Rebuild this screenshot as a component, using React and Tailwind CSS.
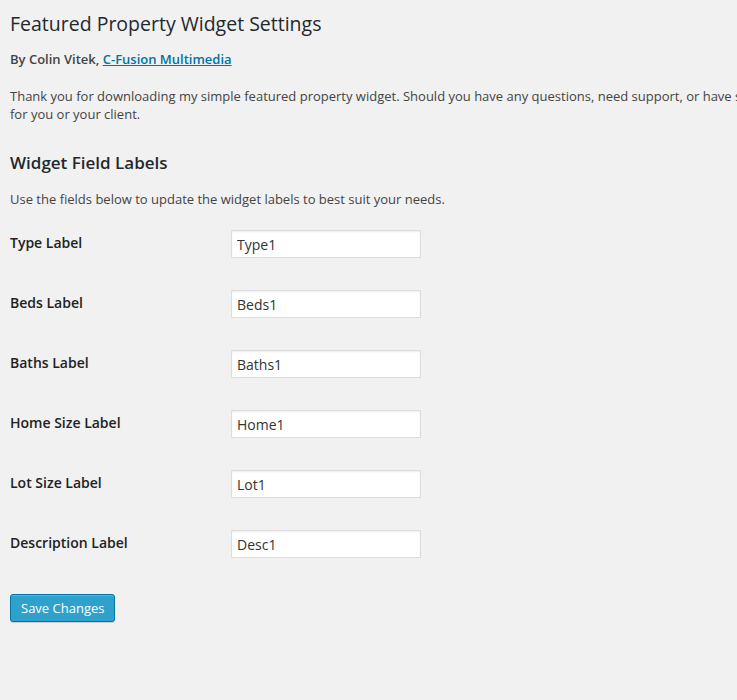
import { useState } from "react";

const FIELDS = [
  { id: "type", label: "Type Label", value: "Type1" },
  { id: "beds", label: "Beds Label", value: "Beds1" },
  { id: "baths", label: "Baths Label", value: "Baths1" },
  { id: "home", label: "Home Size Label", value: "Home1" },
  { id: "lot", label: "Lot Size Label", value: "Lot1" },
  { id: "desc", label: "Description Label", value: "Desc1" },
];

// one row of the settings table
const FieldRow = ({ field, value, onChange }) => (
  <div className="flex items-start h-[60px]">
    <label
      htmlFor={field.id}
      className="w-[221px] shrink-0 mt-[4px] text-[14px] leading-[18px] font-semibold text-[#222]"
    >
      {field.label}
    </label>
    <input
      id={field.id}
      type="text"
      value={value}
      onChange={(e) => onChange(field.id, e.target.value)}
      className="w-[190px] h-[28px] px-[5px] pt-[1px] bg-white border border-[#ddd] text-[14px] text-[#333] shadow-[inset_0_1px_2px_rgba(0,0,0,0.07)] outline-none"
    />
  </div>
);

export default function App() {
  const [values, setValues] = useState(() =>
    Object.fromEntries(FIELDS.map((f) => [f.id, f.value]))
  );
  const update = (id, v) => setValues((s) => ({ ...s, [id]: v }));

  return (
    <div className="min-h-[700px] w-full overflow-hidden bg-[#f1f1f1] font-['Open_Sans',sans-serif] text-[13px] text-[#444]">
      <div className="px-[10px]">
        <h1 className="pt-[9px] text-[19.5px] leading-[29px] font-normal text-[#23282d]">
          Featured Property Widget Settings
        </h1>

        <p className="mt-[12px] leading-[18px] font-semibold">
          By Colin Vitek,{" "}
          <a href="#" className="text-[#0074a2] underline">
            C-Fusion Multimedia
          </a>
        </p>

        {/* the first line runs past the window edge, as in the admin page */}
        <p className="mt-[19px] leading-[18px] whitespace-nowrap">
          Thank you for downloading my simple featured property widget. Should you have any questions, need support, or have suggestions, please feel free to contact me. I hope it works well
          <br />
          for you or your client.
        </p>

        <h2 className="mt-[28px] text-[17px] leading-[24px] font-semibold text-[#23282d]">
          Widget Field Labels
        </h2>

        <p className="mt-[15px] leading-[18px]">
          Use the fields below to update the widget labels to best suit your needs.
        </p>

        <form className="mt-[22px]" onSubmit={(e) => e.preventDefault()}>
          {FIELDS.map((f) => (
            <FieldRow key={f.id} field={f} value={values[f.id]} onChange={update} />
          ))}

          <button
            type="submit"
            className="mt-[4px] h-[28px] px-[10px] rounded-[3px] border border-[#0074a2] bg-[#2ea2cc] text-[13px] leading-[26px] text-white shadow-[inset_0_1px_0_rgba(120,200,230,0.5),0_1px_0_rgba(0,0,0,0.15)]"
          >
            Save Changes
          </button>
        </form>
      </div>
    </div>
  );
}
